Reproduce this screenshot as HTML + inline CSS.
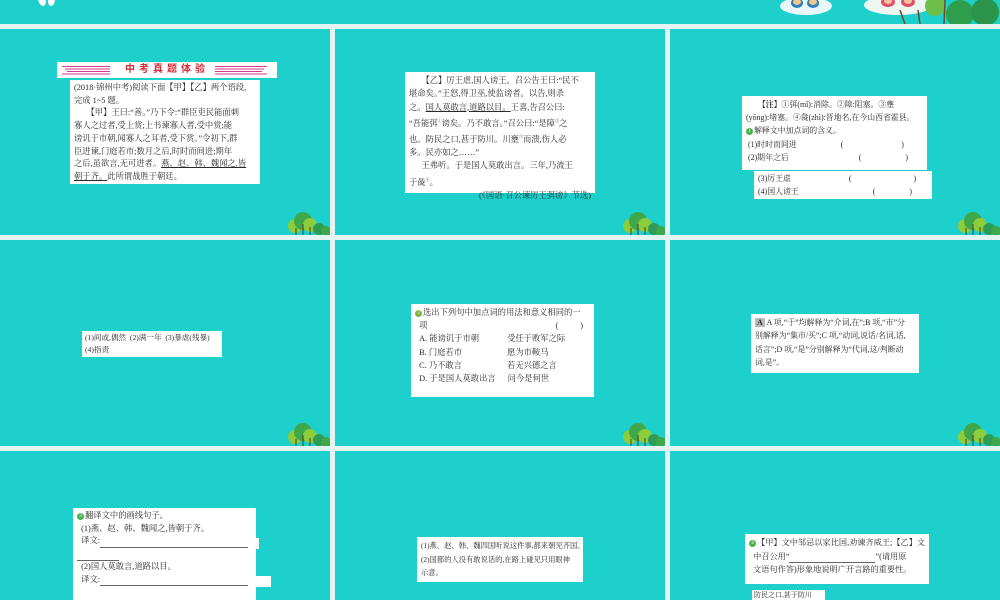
<!DOCTYPE html>
<html><head><meta charset="utf-8">
<style>
*{margin:0;padding:0;box-sizing:border-box}
body{width:1000px;height:600px;overflow:hidden;background:#e3f4f3;position:relative;font-family:"Liberation Serif","Noto Serif CJK SC","Noto Sans CJK SC",serif;color:#222}
.s{position:absolute;background:#1dd0cb;overflow:hidden}
.b{position:absolute;background:#fff;font-size:8.4px;line-height:12.6px;white-space:nowrap;padding:2px 4px;color:#2a2a2a}
.b div{white-space:nowrap}
.tree{position:absolute}
.u{text-decoration:underline}
.n{display:inline-block;width:7px;height:7px;border-radius:50%;background:#4caf50;color:#fff;font-size:5px;line-height:7px;text-align:center;vertical-align:middle;margin-right:1px}
.ln{display:inline-block;border-bottom:0.8px solid #666;height:8px;vertical-align:bottom}
.sp{display:inline-block}
</style></head><body>

<div class="s" style="left:0;top:0;width:1000px;height:24px">
  <svg style="position:absolute;left:0;top:0" width="1000" height="24">
    <path d="M38 0 Q40 6 43 6 Q46 6 46 0Z M48 0 Q48 6 51 6 Q54 6 55 0Z" fill="#fff"/>
    <ellipse cx="806" cy="6" rx="26" ry="9" fill="#e9f6fa"/>
    <ellipse cx="797" cy="3" rx="6" ry="5" fill="#2b7fc0"/><ellipse cx="813" cy="3" rx="6" ry="5" fill="#2b7fc0"/>
    <ellipse cx="797" cy="2" rx="4" ry="3" fill="#f1c88a"/><ellipse cx="813" cy="2" rx="4" ry="3" fill="#f1c88a"/>
    <ellipse cx="898" cy="5" rx="34" ry="10" fill="#eef6f2"/>
    <ellipse cx="888" cy="2" rx="7" ry="5" fill="#e0506a"/><ellipse cx="908" cy="2" rx="7" ry="5" fill="#e0506a"/>
    <ellipse cx="888" cy="1" rx="4" ry="3" fill="#f6c2a0"/><ellipse cx="908" cy="1" rx="4" ry="3" fill="#f6c2a0"/>
    <line x1="900" y1="10" x2="905" y2="24" stroke="#6b4a2a" stroke-width="1.5"/>
    <line x1="918" y1="10" x2="920" y2="24" stroke="#6b4a2a" stroke-width="1.5"/>
    <circle cx="935" cy="6" r="10" fill="#6cc04a"/>
    <circle cx="960" cy="14" r="14" fill="#2e9e4c"/><circle cx="985" cy="12" r="14" fill="#2a944a"/>
    <line x1="945" y1="0" x2="944" y2="24" stroke="#6b4a2a" stroke-width="1.5"/>
  </svg>
</div>

<div class="s" style="left:0;top:29px;width:330px;height:206px"></div>
<div class="s" style="left:335px;top:29px;width:330px;height:206px"></div>
<div class="s" style="left:670px;top:29px;width:330px;height:206px"></div>
<div class="s" style="left:0;top:240px;width:330px;height:206px"></div>
<div class="s" style="left:335px;top:240px;width:330px;height:206px"></div>
<div class="s" style="left:670px;top:240px;width:330px;height:206px"></div>
<div class="s" style="left:0;top:451px;width:330px;height:149px"></div>
<div class="s" style="left:335px;top:451px;width:330px;height:149px"></div>
<div class="s" style="left:670px;top:451px;width:330px;height:149px"></div>

<svg class="tree" style="left:288px;top:212px" width="42" height="23"><circle cx="7" cy="14" r="7" fill="#8ccd3c"/><circle cx="15" cy="9" r="9" fill="#3fa84a"/><circle cx="22" cy="13" r="7" fill="#8ccd3c"/><circle cx="31" cy="17" r="6" fill="#2f9c55"/><circle cx="38" cy="19" r="5" fill="#3fa84a"/><path d="M8 16v7M15 12v11M22 15v8" stroke="#5a3b20" stroke-width="1"/></svg>
<svg class="tree" style="left:623px;top:212px" width="42" height="23"><circle cx="7" cy="14" r="7" fill="#8ccd3c"/><circle cx="15" cy="9" r="9" fill="#3fa84a"/><circle cx="22" cy="13" r="7" fill="#8ccd3c"/><circle cx="31" cy="17" r="6" fill="#2f9c55"/><circle cx="38" cy="19" r="5" fill="#3fa84a"/><path d="M8 16v7M15 12v11M22 15v8" stroke="#5a3b20" stroke-width="1"/></svg>
<svg class="tree" style="left:958px;top:212px" width="42" height="23"><circle cx="7" cy="14" r="7" fill="#8ccd3c"/><circle cx="15" cy="9" r="9" fill="#3fa84a"/><circle cx="22" cy="13" r="7" fill="#8ccd3c"/><circle cx="31" cy="17" r="6" fill="#2f9c55"/><circle cx="38" cy="19" r="5" fill="#3fa84a"/><path d="M8 16v7M15 12v11M22 15v8" stroke="#5a3b20" stroke-width="1"/></svg>
<svg class="tree" style="left:288px;top:423px" width="42" height="23"><circle cx="7" cy="14" r="7" fill="#8ccd3c"/><circle cx="15" cy="9" r="9" fill="#3fa84a"/><circle cx="22" cy="13" r="7" fill="#8ccd3c"/><circle cx="31" cy="17" r="6" fill="#2f9c55"/><circle cx="38" cy="19" r="5" fill="#3fa84a"/><path d="M8 16v7M15 12v11M22 15v8" stroke="#5a3b20" stroke-width="1"/></svg>
<svg class="tree" style="left:623px;top:423px" width="42" height="23"><circle cx="7" cy="14" r="7" fill="#8ccd3c"/><circle cx="15" cy="9" r="9" fill="#3fa84a"/><circle cx="22" cy="13" r="7" fill="#8ccd3c"/><circle cx="31" cy="17" r="6" fill="#2f9c55"/><circle cx="38" cy="19" r="5" fill="#3fa84a"/><path d="M8 16v7M15 12v11M22 15v8" stroke="#5a3b20" stroke-width="1"/></svg>
<svg class="tree" style="left:958px;top:423px" width="42" height="23"><circle cx="7" cy="14" r="7" fill="#8ccd3c"/><circle cx="15" cy="9" r="9" fill="#3fa84a"/><circle cx="22" cy="13" r="7" fill="#8ccd3c"/><circle cx="31" cy="17" r="6" fill="#2f9c55"/><circle cx="38" cy="19" r="5" fill="#3fa84a"/><path d="M8 16v7M15 12v11M22 15v8" stroke="#5a3b20" stroke-width="1"/></svg>

<!-- Slide 1 -->
<div style="position:absolute;left:57px;top:62px;width:220px;height:16px;background:#fff">
  <svg width="220" height="16" style="position:absolute;left:0;top:0">
    <g stroke="#d63a8e" stroke-width="1.1"><path d="M5 4.5H53M8 7H53M10 9.5H53M5 12H53"/><path d="M158 4.5H210M158 7H207M158 9.5H205M158 12H210"/></g>
  </svg>
  <div style="position:absolute;left:0;width:220px;top:2px;text-align:center;font-family:'Liberation Sans','Noto Sans CJK SC',sans-serif;font-weight:bold;color:#d42a3a;font-size:10px;letter-spacing:4px;line-height:12px">中考真题体验</div>
</div>
<div class="b" style="left:70px;top:80px;width:190px;height:104px;line-height:12.7px;font-size:8.3px">
<div>(2018·锦州中考)阅读下面【甲】【乙】两个语段,</div>
<div>完成 1~5 题。</div>
<div style="text-indent:1.5em">【甲】王曰:“善。”乃下令:“群臣吏民能面刺</div>
<div>寡人之过者,受上赏;上书谏寡人者,受中赏;能</div>
<div>谤讥于市朝,闻寡人之耳者,受下赏。”令初下,群</div>
<div>臣进谏,门庭若市;数月之后,时时而间进;期年</div>
<div>之后,虽欲言,无可进者。<span class="u">燕、赵、韩、魏闻之,皆</span></div>
<div><span class="u">朝于齐。</span>此所谓战胜于朝廷。</div>
</div>

<!-- Slide 2 -->
<div class="b" style="left:405px;top:72px;width:190px;height:121px;line-height:13.3px;font-size:8.3px">
<div style="text-indent:1.5em">【乙】厉王虐,国人谤王。召公告王曰:“民不</div>
<div>堪命矣。”王怒,得卫巫,使监谤者。以告,则杀</div>
<div>之。<span class="u">国人莫敢言,道路以目。</span>王喜,告召公曰:</div>
<div>“吾能弭<sup style="font-size:4px">①</sup>谤矣。乃不敢言。”召公曰:“是障<sup style="font-size:4px">②</sup>之</div>
<div>也。防民之口,甚于防川。川壅<sup style="font-size:4px">③</sup>而溃,伤人必</div>
<div>多。民亦如之……”</div>
<div style="text-indent:1.5em">王弗听。于是国人莫敢出言。三年,乃流王</div>
<div>于彘<sup style="font-size:4px">④</sup>。</div>
<div style="text-align:right">(《国语·召公谏厉王弭谤》节选)</div>
</div>

<!-- Slide 3 -->
<div class="b" style="left:742px;top:96px;width:185px;height:74px;line-height:13.2px;font-size:7.9px">
<div style="text-indent:1.5em"><b>【注】</b>①弭(mǐ):消除。②障:阻塞。③壅</div>
<div>(yōng):堵塞。④彘(zhì):晋地名,在今山西省霍县。</div>
<div><span class="n">1</span>解释文中加点词的含义。</div>
<div>&nbsp;(1)时时而间进<span class="sp" style="width:44px"></span>(<span class="sp" style="width:58px"></span>)</div>
<div>&nbsp;(2)期年之后<span class="sp" style="width:70px"></span>(<span class="sp" style="width:44px"></span>)</div>
</div>
<div class="b" style="left:754px;top:171px;width:178px;height:28px;line-height:12.5px;font-size:7.9px">
<div>(3)厉王虐<span class="sp" style="width:58px"></span>(<span class="sp" style="width:62px"></span>)</div>
<div>(4)国人谤王<span class="sp" style="width:74px"></span>(<span class="sp" style="width:34px"></span>)</div>
</div>

<!-- Slide 4 -->
<div class="b" style="left:82px;top:331px;width:140px;height:26px;line-height:12px;font-size:7.6px;padding:1px 3px">
<div>(1)间或,偶然&nbsp;&nbsp;(2)满一年&nbsp;&nbsp;(3)暴虐(残暴)</div>
<div>(4)指责</div>
</div>

<!-- Slide 5 -->
<div class="b" style="left:411px;top:304px;width:183px;height:93px;line-height:13.2px;font-size:8.3px">
<div><span class="n" style="background:#7cb342">2</span>选出下列句中加点词的用法和意义相同的一</div>
<div>&nbsp;&nbsp;项<span class="sp" style="width:128px"></span>(<span class="sp" style="width:22px"></span>)</div>
<div>&nbsp;&nbsp;A. 能谤讥于市朝<span class="sp" style="width:28px"></span>受任于败军之际</div>
<div>&nbsp;&nbsp;B. 门庭若市<span class="sp" style="width:45px"></span>愿为市鞍马</div>
<div>&nbsp;&nbsp;C. 乃不敢言<span class="sp" style="width:45px"></span>若无兴德之言</div>
<div>&nbsp;&nbsp;D. 于是国人莫敢出言<span class="sp" style="width:12px"></span>问今是何世</div>
</div>

<!-- Slide 6 -->
<div class="b" style="left:751px;top:314px;width:168px;height:59px;line-height:13.3px;font-size:7.9px">
<div><span style="background:#bbb;font-weight:bold;padding:0 2px">A</span>&nbsp;A 项,“于”均解释为“介词,在”;B 项,“市”分</div>
<div>别解释为“集市/买”;C 项,“动词,说话/名词,话,</div>
<div>话言”;D 项,“是”分别解释为“代词,这/判断动</div>
<div>词,是”。</div>
</div>

<!-- Slide 7 -->
<div class="b" style="left:73px;top:508px;width:183px;height:92px;line-height:12.7px;font-size:8.3px">
<div><span class="n">3</span>翻译文中的画线句子。</div>
<div>&nbsp;&nbsp;(1)燕、赵、韩、魏闻之,皆朝于齐。</div>
<div>&nbsp;&nbsp;译文:<span class="ln" style="width:148px"></span></div>
<div><span class="ln" style="width:42px"></span></div>
<div>&nbsp;&nbsp;(2)国人莫敢言,道路以目。</div>
<div>&nbsp;&nbsp;译文:<span class="ln" style="width:148px"></span></div>
</div>
<div style="position:absolute;left:256px;top:538px;width:3px;height:11px;background:#fff"></div>
<div style="position:absolute;left:256px;top:576px;width:15px;height:11px;background:#fff"></div>

<!-- Slide 8 -->
<div class="b" style="left:417px;top:537px;width:166px;height:45px;line-height:13.5px;font-size:7.3px">
<div>(1)燕、赵、韩、魏四国听说这件事,都来朝见齐国。</div>
<div>(2)国都的人没有敢说话的,在路上碰见只用眼神</div>
<div>示意。</div>
</div>

<!-- Slide 9 -->
<div class="b" style="left:745px;top:534px;width:184px;height:50px;line-height:13.5px;font-size:8.2px">
<div><span class="n">4</span>【甲】文中邹忌以家比国,劝谏齐威王;【乙】文</div>
<div>&nbsp;&nbsp;中召公用“<span class="ln" style="width:86px"></span>”(请用原</div>
<div>&nbsp;&nbsp;文语句作答)形象地说明广开言路的重要性。</div>
</div>
<div class="b" style="left:752px;top:590px;width:73px;height:10px;line-height:10px;padding:0 2px;font-size:7px">防民之口,甚于防川</div>

</body></html>
